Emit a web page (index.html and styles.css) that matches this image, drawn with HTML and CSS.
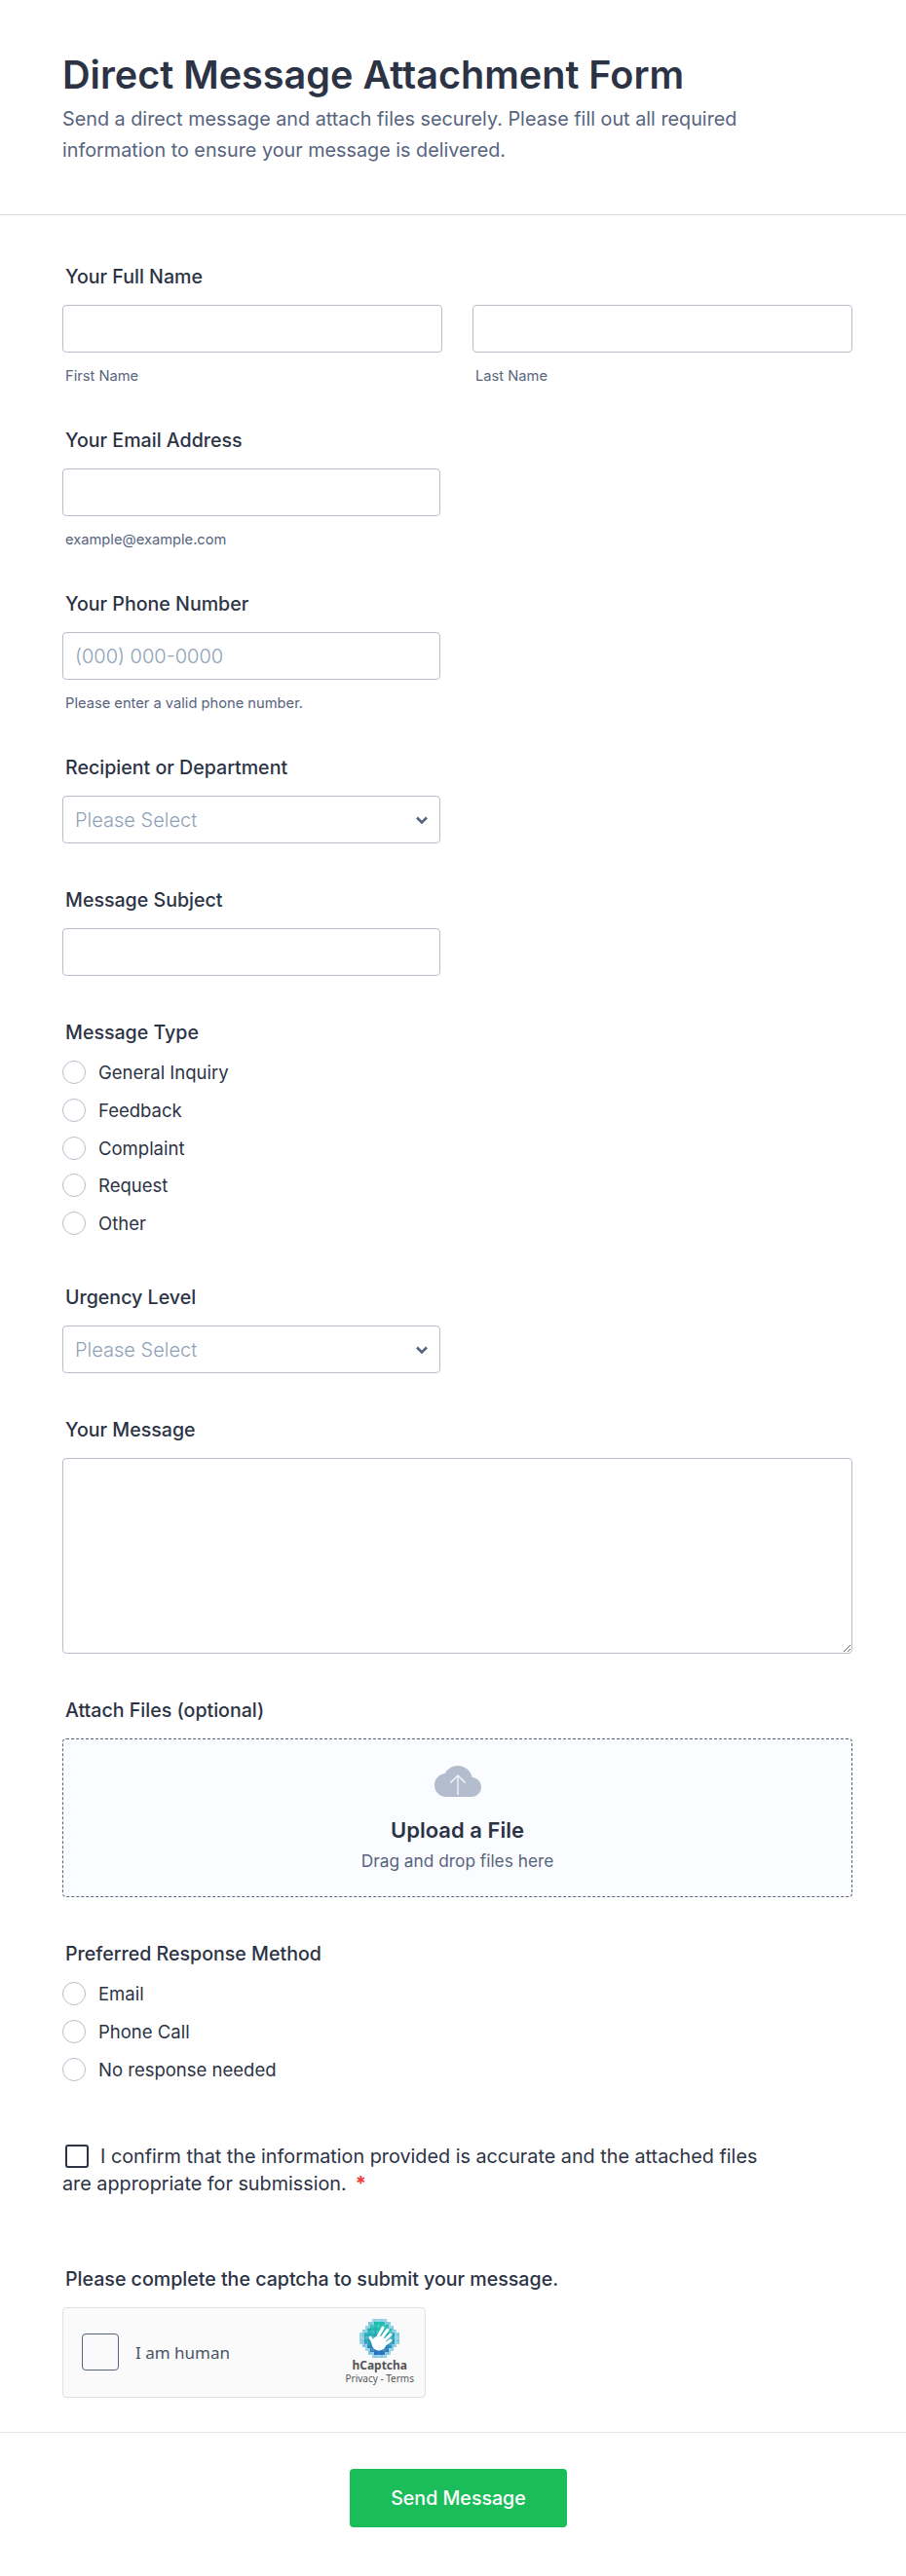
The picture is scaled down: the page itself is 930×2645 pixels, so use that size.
FILE: index.html
```html
<!DOCTYPE html>
<html lang="en">
<head>
    <meta charset="UTF-8">
    <meta name="viewport" content="width=device-width, initial-scale=1.0">
    <title>Direct Message Attachment Form</title>
    <link rel="stylesheet" href="styles.css">
</head>
<body>
    <header class="form-header">
        <h1>Direct Message Attachment Form</h1>
        <p>Send a direct message and attach files securely. Please fill out all required information to ensure your message is delivered.</p>
    </header>

    <form class="form-body">
        <div class="field">
            <label class="field-label">Your Full Name</label>
            <div class="name-row">
                <div>
                    <input type="text" class="text-input">
                    <span class="hint">First Name</span>
                </div>
                <div>
                    <input type="text" class="text-input">
                    <span class="hint">Last Name</span>
                </div>
            </div>
        </div>

        <div class="field">
            <label class="field-label">Your Email Address</label>
            <input type="email" class="text-input half">
            <span class="hint">example@example.com</span>
        </div>

        <div class="field">
            <label class="field-label">Your Phone Number</label>
            <input type="tel" class="text-input half" placeholder="(000) 000-0000">
            <span class="hint">Please enter a valid phone number.</span>
        </div>

        <div class="field">
            <label class="field-label">Recipient or Department</label>
            <div class="select-wrap half">
                <select class="text-input">
                    <option>Please Select</option>
                </select>
                <svg class="chevron" viewBox="0 0 12 8" width="12" height="8"><path d="M1 1.5l5 5 5-5" fill="none" stroke="#57647e" stroke-width="2.6"/></svg>
            </div>
        </div>

        <div class="field">
            <label class="field-label">Message Subject</label>
            <input type="text" class="text-input half">
        </div>

        <div class="field field-radio">
            <label class="field-label">Message Type</label>
            <div class="radio-list">
                <label class="radio"><input type="radio" name="type">General Inquiry</label>
                <label class="radio"><input type="radio" name="type">Feedback</label>
                <label class="radio"><input type="radio" name="type">Complaint</label>
                <label class="radio"><input type="radio" name="type">Request</label>
                <label class="radio"><input type="radio" name="type">Other</label>
            </div>
        </div>

        <div class="field">
            <label class="field-label">Urgency Level</label>
            <div class="select-wrap half">
                <select class="text-input">
                    <option>Please Select</option>
                </select>
                <svg class="chevron" viewBox="0 0 12 8" width="12" height="8"><path d="M1 1.5l5 5 5-5" fill="none" stroke="#57647e" stroke-width="2.6"/></svg>
            </div>
        </div>

        <div class="field">
            <label class="field-label">Your Message</label>
            <textarea class="text-input message"></textarea>
        </div>

        <div class="field">
            <label class="field-label">Attach Files (optional)</label>
            <div class="dropzone">
                <svg class="cloud" viewBox="0 4 24 16" width="48" height="32">
                    <path d="M19.35 10.04C18.67 6.59 15.64 4 12 4 9.11 4 6.6 5.64 5.35 8.04 2.34 8.36 0 10.91 0 14c0 3.31 2.69 6 6 6h13c2.76 0 5-2.24 5-5 0-2.64-2.05-4.78-4.65-4.96z" fill="#b3bdcd"/>
                    <path d="M12 19V9.5M8.2 12.8L12 9l3.8 3.8" fill="none" stroke="#eef1f6" stroke-width=".75"/>
                </svg>
                <strong>Upload a File</strong>
                <span>Drag and drop files here</span>
            </div>
        </div>

        <div class="field field-last">
            <label class="field-label">Preferred Response Method</label>
            <div class="radio-list">
                <label class="radio"><input type="radio" name="method">Email</label>
                <label class="radio"><input type="radio" name="method">Phone Call</label>
                <label class="radio"><input type="radio" name="method">No response needed</label>
            </div>
        </div>

        <div class="confirm">
            <div class="confirm-line"><input type="checkbox" class="confirm-box">I confirm that the information provided is accurate and the attached files</div>
            <div class="confirm-line">are appropriate for submission.<span class="required">*</span></div>
        </div>

        <div class="captcha-field">
            <label class="field-label">Please complete the captcha to submit your message.</label>
            <div class="captcha">
                <span class="captcha-box"></span>
                <span class="captcha-text">I am human</span>
                <div class="captcha-brand">
                    <svg viewBox="0 0 41 40" width="41" height="40">
                        <defs>
                            <linearGradient id="logoFill" x1="0" y1="0" x2="0" y2="1">
                                <stop offset="0" stop-color="#22c7b0"/>
                                <stop offset=".55" stop-color="#2fa8c0"/>
                                <stop offset="1" stop-color="#2f6fc2"/>
                            </linearGradient>
                            <pattern id="logoDots" width="6" height="6" patternUnits="userSpaceOnUse">
                                <rect x="0" y="0" width="3" height="3" fill="#fff" fill-opacity=".12"/>
                                <rect x="3" y="3" width="3" height="3" fill="#000" fill-opacity=".06"/>
                            </pattern>
                        </defs>
                        <path d="M13 0h15v3h4v4h3v4h3v3h3v12h-3v3h-3v4h-3v4h-4v3H13v-3H9v-4H6v-4H3v-3H0V14h3v-3h3V7h3V3h4z" fill="#8fd0e4"/>
                        <path d="M15 3h11v3h4v4h3v4h3v12h-3v4h-3v4h-4v3H15v-3h-4v-4H8v-4H5V14h3v-4h3V6h4z" fill="url(#logoFill)"/>
                        <path d="M13 0h15v3h4v4h3v4h3v3h3v12h-3v3h-3v4h-3v4h-4v3H13v-3H9v-4H6v-4H3v-3H0V14h3v-3h3V7h3V3h4z" fill="url(#logoDots)"/>
                        <g fill="none" stroke="#fff" stroke-width="3" stroke-linecap="round">
                            <path d="M18 20l6-11M21 22l8-11M24 24l8-8M25 27l7-5M15 26l-4-7"/>
                        </g>
                        <circle cx="20" cy="25" r="7.5" fill="#fff"/>
                    </svg>
                    <span class="brand-name">hCaptcha</span>
                    <span class="brand-links">Privacy - Terms</span>
                </div>
            </div>
        </div>

        <footer class="form-footer">
            <button type="button" class="submit-btn">Send Message</button>
        </footer>
    </form>
</body>
</html>
```

FILE: styles.css
```css
* {
    box-sizing: border-box;
}

body {
    margin: 0;
    font-family: Inter, "Liberation Sans", sans-serif;
    color: #2c3345;
    background-color: white;
}

.form-header {
    height: 221px;
    padding: 53px 64px 0;
    border-bottom: 1px solid #d8dae3;
}

.form-header h1 {
    margin: 0 0 5px;
    font-size: 39.6px;
    line-height: 48px;
    font-weight: 600;
}

.form-header p {
    margin: 0;
    max-width: 720px;
    font-size: 19.8px;
    line-height: 32px;
    color: #57647e;
}

.form-body {
    padding-top: 51px;
}

.field {
    margin: 0 55px 0 64px;
    padding-bottom: 46px;
}

.field-radio {
    padding-bottom: 52px;
}

.field-last {
    padding-bottom: 63px;
}

.field-label {
    display: block;
    margin: 0 3px 17px;
    font-size: 19.6px;
    line-height: 24px;
    font-weight: 450;
}

.text-input {
    display: block;
    width: 100%;
    height: 49px;
    padding: 0 12px;
    background-color: white;
    border: 1px solid #b8bdc9;
    border-radius: 4px;
    font-family: inherit;
    font-size: 20px;
    font-weight: 300;
    color: #8fa1b7;
}

.text-input::placeholder {
    color: #8fa1b7;
    opacity: 1;
}

.half {
    width: 388px;
}

.name-row {
    display: grid;
    grid-template-columns: 390px 390px;
    gap: 31px;
}

.hint {
    display: block;
    margin: 16px 3px 0;
    font-size: 14.7px;
    line-height: 16px;
    color: #57647e;
}

.select-wrap {
    position: relative;
}

.select-wrap select {
    appearance: none;
}

.chevron {
    position: absolute;
    top: 21px;
    right: 13px;
}

.radio-list {
    display: flex;
    flex-direction: column;
    gap: 14.75px;
}

.radio {
    display: flex;
    align-items: center;
    gap: 13px;
    font-size: 18.5px;
    line-height: 24px;
}

.radio input {
    appearance: none;
    width: 24px;
    height: 24px;
    margin: 0;
    background-color: white;
    border: 1px solid #b8bdc9;
    border-radius: 50%;
}

.message {
    height: 201px;
}

.dropzone {
    display: flex;
    flex-direction: column;
    align-items: center;
    height: 163px;
    padding-top: 27px;
    background-color: #fbfcff;
    border: 1px dashed #57647e;
    border-radius: 4px;
}

.dropzone strong {
    margin-top: 20px;
    font-size: 22px;
    line-height: 28px;
    font-weight: 600;
}

.dropzone span {
    margin-top: 8px;
    font-size: 17.3px;
    line-height: 20px;
    color: #57647e;
}

.confirm {
    margin-left: 64px;
    font-size: 19.8px;
}

.confirm-line {
    height: 28px;
    line-height: 28px;
}

.confirm-box {
    appearance: none;
    width: 24px;
    height: 24px;
    margin: 0 12px 0 3px;
    vertical-align: -5px;
    background-color: white;
    border: 2px solid #2c3345;
    border-radius: 3px;
}

.required {
    margin-left: 9px;
    font-size: 20px;
    font-weight: 700;
    color: #f23a3c;
}

.captcha-field {
    margin: 72px 0 0 64px;
}

.captcha {
    display: flex;
    align-items: center;
    width: 373px;
    height: 93px;
    padding: 0 11px 0 19px;
    background-color: #fafafa;
    border: 1px solid #e0e0e5;
    border-radius: 4px;
}

.captcha-box {
    width: 38px;
    height: 38px;
    background-color: #fafafa;
    border: 1px solid #57647e;
    border-radius: 4px;
}

.captcha-text {
    margin-left: 17px;
    font-family: "Noto Sans", sans-serif;
    font-size: 17px;
    color: #4a5468;
}

.captcha-brand {
    display: flex;
    flex-direction: column;
    align-items: center;
    margin-left: auto;
    font-family: "Noto Sans", sans-serif;
    color: #555;
}

.captcha-brand svg {
    display: block;
}

.brand-name {
    margin-top: 1px;
    font-size: 12px;
    line-height: 14px;
    font-weight: 700;
}

.brand-links {
    font-size: 10px;
    line-height: 13px;
}

.form-footer {
    display: flex;
    justify-content: center;
    height: 147px;
    margin-top: 35px;
    padding: 37px 0 0 11px;
    border-top: 1px solid #e3e5ec;
}

.submit-btn {
    width: 223px;
    height: 60px;
    background-color: #1bbd5b;
    color: white;
    border: none;
    border-radius: 4px;
    font-family: inherit;
    font-size: 19.6px;
    font-weight: 500;
    cursor: pointer;
}
```
